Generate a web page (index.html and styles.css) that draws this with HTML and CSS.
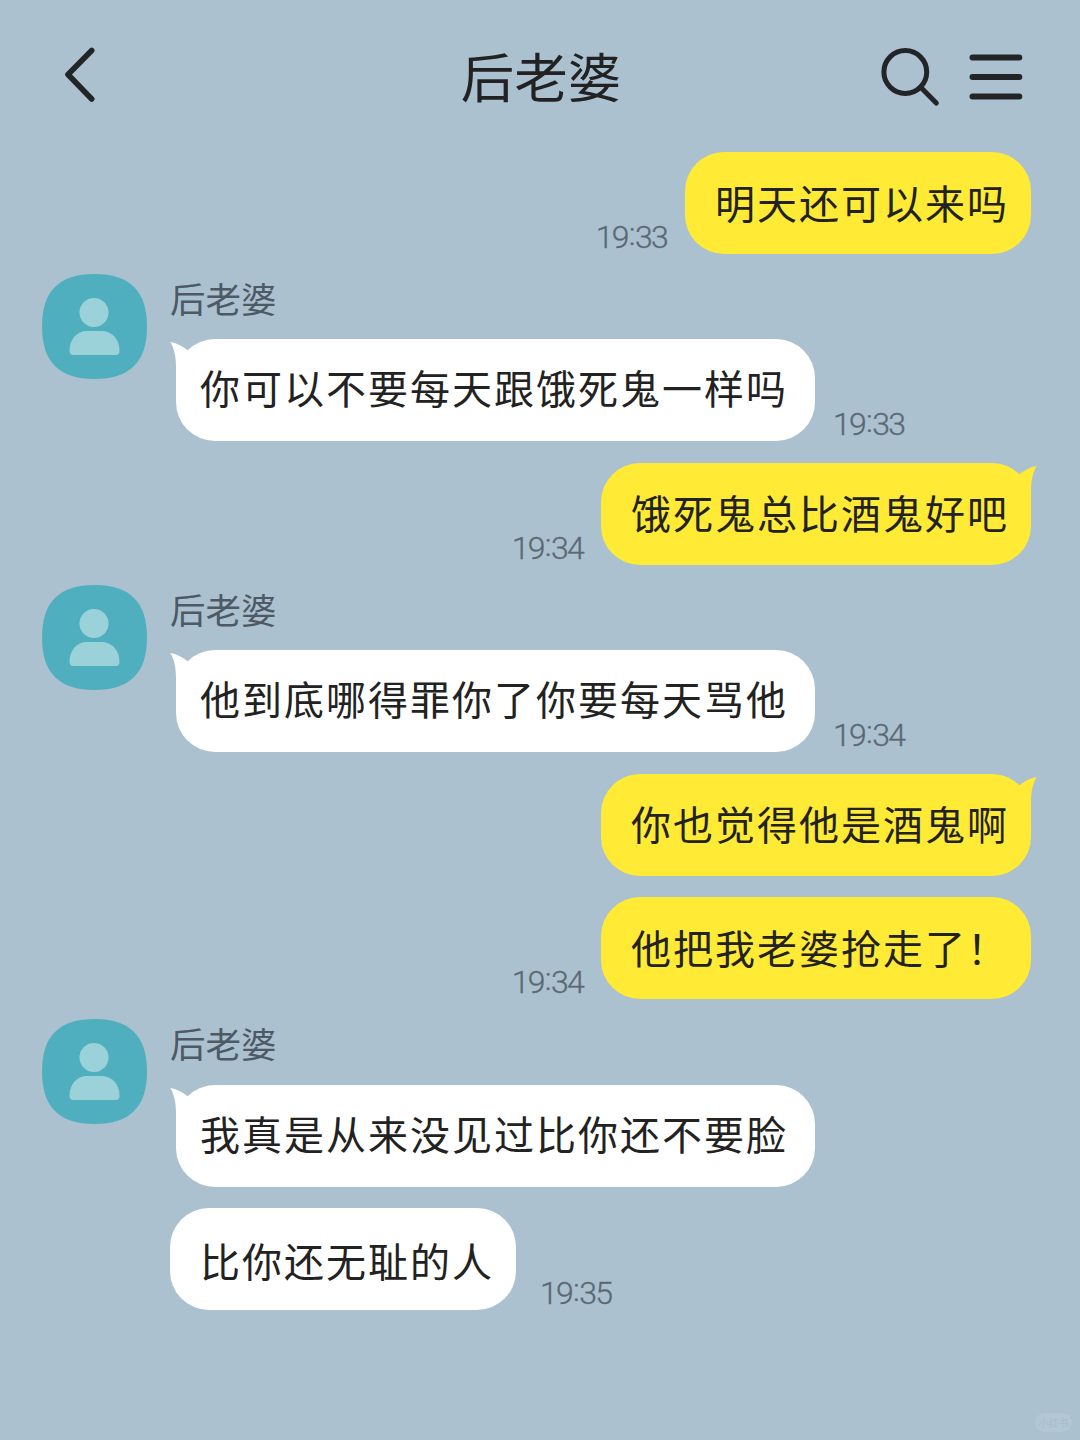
FILE: index.html
```
<!DOCTYPE html>
<html lang="zh-CN">
<head>
  <meta charset="UTF-8">
  <meta name="viewport" content="width=device-width, initial-scale=1.0">
  <title>后老婆</title>
  <link rel="stylesheet" href="styles.css">
</head>
<body>
  <svg class="defs" width="0" height="0">
    <symbol id="avatar" viewBox="0 0 105 105">
      <path fill="#50afbe" d="M52.5 0C88 0 105 17 105 52.5S88 105 52.5 105 0 88 0 52.5 17 0 52.5 0Z"/>
      <circle fill="#9bd2d9" cx="52" cy="38.5" r="14.5"/>
      <path fill="#9bd2d9" d="M27.5 77C27.5 65 35 57 45 57H59C70 57 77.500 65 77.500 77Q77.500 81 73.500 81H31.500Q27.500 81 27.500 77Z"/>
    </symbol>
    <symbol id="tail" viewBox="0 0 30 40">
      <path d="M.3 3C6 4 13 7 18 11.500L30 30 6 40V28C6 17 4 9 .3 3Z"/>
    </symbol>
  </svg>

  <header class="header">
    <svg class="back" width="36" height="60" viewBox="0 0 36 60">
      <path d="M29.700 5.500L6 29.500 29.700 54"/>
    </svg>
    <h1 class="title">后老婆</h1>
    <div class="actions">
      <svg width="62" height="62" viewBox="0 0 62 62">
        <circle cx="27.300" cy="27" r="21.400"/>
        <path d="M42.700 42.300L58.300 58"/>
      </svg>
      <svg class="menu" width="54" height="46" viewBox="0 0 54 46">
        <path d="M3.500 3.500H50.300M3.500 23H50.300M3.500 42.500H50.300"/>
      </svg>
    </div>
  </header>

  <main class="chat">
    <div class="row mine">
      <span class="time">19<i>:</i>33</span>
      <div class="bubble low">明天还可以来吗</div>
    </div>

    <section class="group">
      <svg class="avatar"><use href="#avatar"/></svg>
      <div class="messages">
        <div class="name">后老婆</div>
        <div class="row">
          <div class="bubble first">你可以不要每天跟饿死鬼一样吗<svg class="tail"><use href="#tail"/></svg></div>
          <span class="time">19<i>:</i>33</span>
        </div>
      </div>
    </section>

    <div class="row mine">
      <span class="time">19<i>:</i>34</span>
      <div class="bubble">饿死鬼总比酒鬼好吧<svg class="tail"><use href="#tail"/></svg></div>
    </div>

    <section class="group">
      <svg class="avatar"><use href="#avatar"/></svg>
      <div class="messages">
        <div class="name">后老婆</div>
        <div class="row">
          <div class="bubble first">他到底哪得罪你了你要每天骂他<svg class="tail"><use href="#tail"/></svg></div>
          <span class="time">19<i>:</i>34</span>
        </div>
      </div>
    </section>

    <div class="row mine">
      <div class="bubble">你也觉得他是酒鬼啊<svg class="tail"><use href="#tail"/></svg></div>
    </div>
    <div class="row mine">
      <span class="time">19<i>:</i>34</span>
      <div class="bubble low">他把我老婆抢走了！</div>
    </div>

    <section class="group">
      <svg class="avatar"><use href="#avatar"/></svg>
      <div class="messages">
        <div class="name">后老婆</div>
        <div class="row">
          <div class="bubble first">我真是从来没见过比你还不要脸<svg class="tail"><use href="#tail"/></svg></div>
        </div>
        <div class="row next">
          <div class="bubble">比你还无耻的人</div>
          <span class="time">19<i>:</i>35</span>
        </div>
      </div>
    </section>
  </main>
  <div class="watermark">小红书</div>
</body>
</html>
```
FILE: styles.css
```
* {
  box-sizing: border-box;
}
body {
  margin: 0;
  height: 1440px;
  overflow: hidden;
  position: relative;
  background: #abc1d0;
  color: #222;
  font-family: "Noto Sans CJK SC", sans-serif;
}
.defs {
  position: absolute;
}
/* Header */
.header {
  height: 151.8px;
  padding: 0 57px 0 62px;
  display: grid;
  grid-template-columns: 150px 1fr 150px;
  align-items: center;
}
.header svg {
  display: block;
  fill: none;
  stroke: #222426;
  stroke-width: 5;
  stroke-linecap: round;
  stroke-linejoin: round;
}
.header .back {
  stroke-width: 5.6;
  margin-bottom: 2px;
}
.title {
  margin: 0;
  padding-right: 3px;
  padding-bottom: 2px;
  font-size: 53.5px;
  font-weight: 400;
  line-height: 80px;
  text-align: center;
}
.actions {
  display: flex;
  justify-content: flex-end;
  align-items: center;
  gap: 29px;
}
.header .menu {
  margin-top: 2px;
  stroke-width: 6;
}
/* Messages */
.chat {
  display: flex;
  flex-direction: column;
  gap: 21.5px;
  padding: 0 49px 0 42px;
}
.row {
  display: flex;
  align-items: flex-end;
  gap: 18px;
}
.row.mine {
  justify-content: flex-end;
}
.bubble {
  position: relative;
  height: 102px;
  padding: 0 22px 0 30px;
  border-radius: 39px;
  background: #fff;
  font-size: 40px;
  letter-spacing: 2px;
  line-height: 98px;
  white-space: nowrap;
}
.mine .bubble {
  background: #ffea35;
}
.mine .bubble.low {
  line-height: 101px;
}
.bubble.first {
  margin-left: 6px;
  padding: 0 27px 0 24px;
  line-height: 97px;
}
.tail {
  position: absolute;
  top: 0;
  left: -6px;
  width: 30px;
  height: 40px;
  fill: #fff;
}
.mine .tail {
  left: auto;
  right: -6px;
  fill: #ffea35;
  transform: scaleX(-1);
}
.time {
  margin-bottom: 1px;
  color: #5b6873;
  font-family: Roboto, sans-serif;
  font-size: 32px;
  font-weight: 300;
  letter-spacing: -1.7px;
  line-height: 32px;
  -webkit-text-stroke: 0.3px #5b6873;
}
.time i {
  position: relative;
  top: -3px;
  margin: 0 1px;
  font-style: normal;
}
.group {
  display: flex;
  gap: 23px;
  margin-top: -1.5px;
}
.avatar {
  width: 105px;
  height: 105px;
  flex-shrink: 0;
}
.name {
  height: 65.5px;
  color: #4d5964;
  font-size: 35.5px;
  line-height: 48px;
}
.row.next {
  margin-top: 21.5px;
  gap: 24px;
}
.next .bubble {
  line-height: 105px;
}
.watermark {
  position: absolute;
  right: 8px;
  bottom: 8px;
  width: 37px;
  height: 19px;
  border-radius: 10px;
  background: #b2c6d4;
  color: #a8bdcb;
  font-size: 10px;
  line-height: 19px;
  text-align: center;
}
```
